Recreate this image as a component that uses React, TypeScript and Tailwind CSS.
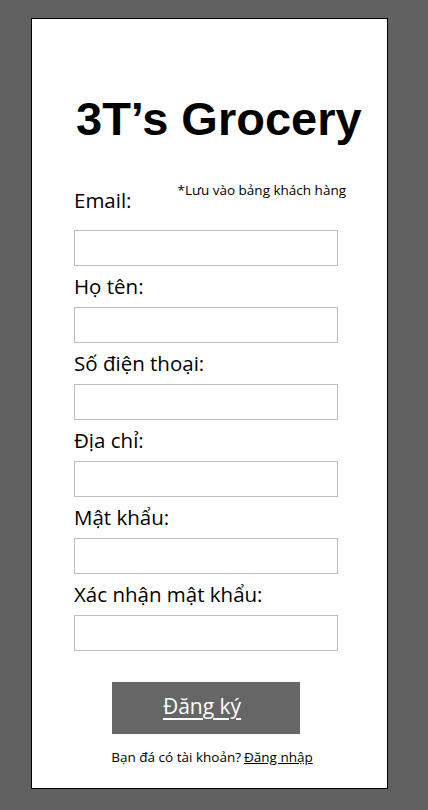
import React from 'react';

const fields = ['Họ tên:', 'Số điện thoại:', 'Địa chỉ:', 'Mật khẩu:', 'Xác nhận mật khẩu:'];

function Field({ label }: { label: string }) {
  return (
    <div className="flex flex-col">
      <label className="h-[41px] leading-[41px] text-[20.5px] text-black">{label}</label>
      <input className="h-[36px] w-full border border-[#bdbdbd] bg-white outline-none" />
    </div>
  );
}

export default function App() {
  return (
    <div
      className="min-h-[810px] w-full bg-[#606060] pt-[18px] pl-[31px]"
      style={{ fontFamily: '"Open Sans", "Noto Sans", sans-serif' }}
    >
      <div className="flex h-[771px] w-[357px] flex-col border border-black bg-white pl-[42px] pr-[49px] pt-[76px]">
        {/* Title */}
        <h1
          className="ml-[2px] h-[48px] whitespace-nowrap text-[47px] font-bold leading-[48px] text-black"
          style={{ fontFamily: '"Liberation Sans", Arial, sans-serif' }}
        >
          3T’s Grocery
        </h1>

        {/* Email row with note */}
        <div className="flex h-[87px] items-end justify-between pb-[16px]">
          <label className="text-[20.5px] leading-[28px] text-black">Email:</label>
          <span className="mb-[15px] mr-[-8px] whitespace-nowrap text-[13.5px] leading-[18px] text-black">
            *Lưu vào bảng khách hàng
          </span>
        </div>
        <input className="h-[36px] w-full border border-[#bdbdbd] bg-white outline-none" />

        {fields.map((f) => (
          <Field key={f} label={f} />
        ))}

        <button
          type="button"
          className="mx-auto mt-[31px] h-[52px] w-[188px] bg-[#666666] pr-[8px] pb-[2px] text-[21px] text-white underline underline-offset-[4px]"
        >
          Đăng ký
        </button>

        <p className="ml-[12px] mt-[14px] whitespace-nowrap text-center text-[13.5px] leading-[18px] text-black">
          Bạn đá có tài khoản?<span className="ml-[3px] underline">Đăng nhập</span>
        </p>
      </div>
    </div>
  );
}
